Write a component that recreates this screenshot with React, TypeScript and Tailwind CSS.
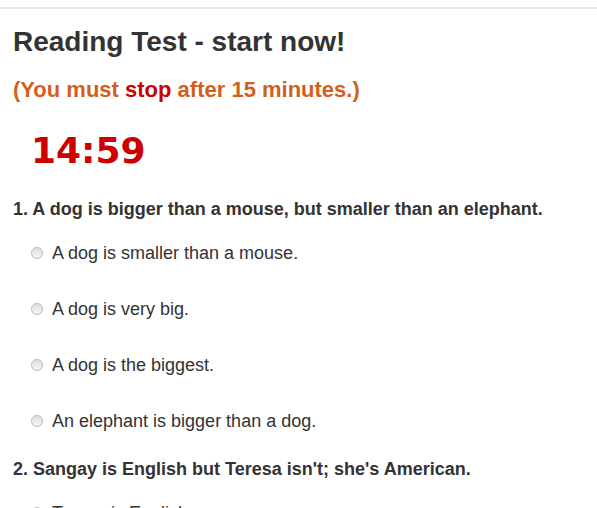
import React from "react";

type Question = {
    text: string;
    options: string[];
};

const questions: Question[] = [
    {
        text: "1. A dog is bigger than a mouse, but smaller than an elephant.",
        options: [
            "A dog is smaller than a mouse.",
            "A dog is very big.",
            "A dog is the biggest.",
            "An elephant is bigger than a dog.",
        ],
    },
    {
        text: "2. Sangay is English but Teresa isn't; she's American.",
        options: ["Teresa is English.", "Sangay is American.", "Teresa is American."],
    },
];

function Radio() {
    return (
        <span className="block w-[12px] h-[12px] rounded-full border border-[#b9b9b9] bg-linear-to-b from-[#dedede] to-[#f6f6f6] shrink-0" />
    );
}

export default function App() {
    return (
        <div className="min-h-screen bg-white overflow-hidden" style={{ fontFamily: '"Liberation Sans", Arial, sans-serif' }}>
            <div className="mt-[7px] border-t-2 border-[#e8e8e8] pt-[17px] pl-[13px] text-[#333]">
                <h1 className="text-[28px] leading-[32px] font-bold">Reading Test - start now!</h1>
                <p className="mt-[19px] text-[22px] leading-[26px] font-bold text-[#d25f1b]">
                    (You must <span className="text-[#cc0000]">stop</span> after 15 minutes.)
                </p>
                <div
                    className="mt-[28px] ml-[18px] text-[36px] leading-[40px] font-bold text-[#cc0000]"
                    style={{ fontFamily: '"DejaVu Sans", Verdana, sans-serif' }}
                >
                    14:59
                </div>

                {questions.map((q) => (
                    <div key={q.text} className="mt-[28px]">
                        <div className="text-[18px] leading-[20px] font-bold">{q.text}</div>
                        <div className="mt-[24px] flex flex-col gap-[36px] pl-[18px]">
                            {q.options.map((o) => (
                                <label key={o} className="flex items-center gap-[9px] text-[18px] leading-[20px]">
                                    <Radio />
                                    <span>{o}</span>
                                </label>
                            ))}
                        </div>
                    </div>
                ))}
            </div>
        </div>
    );
}
